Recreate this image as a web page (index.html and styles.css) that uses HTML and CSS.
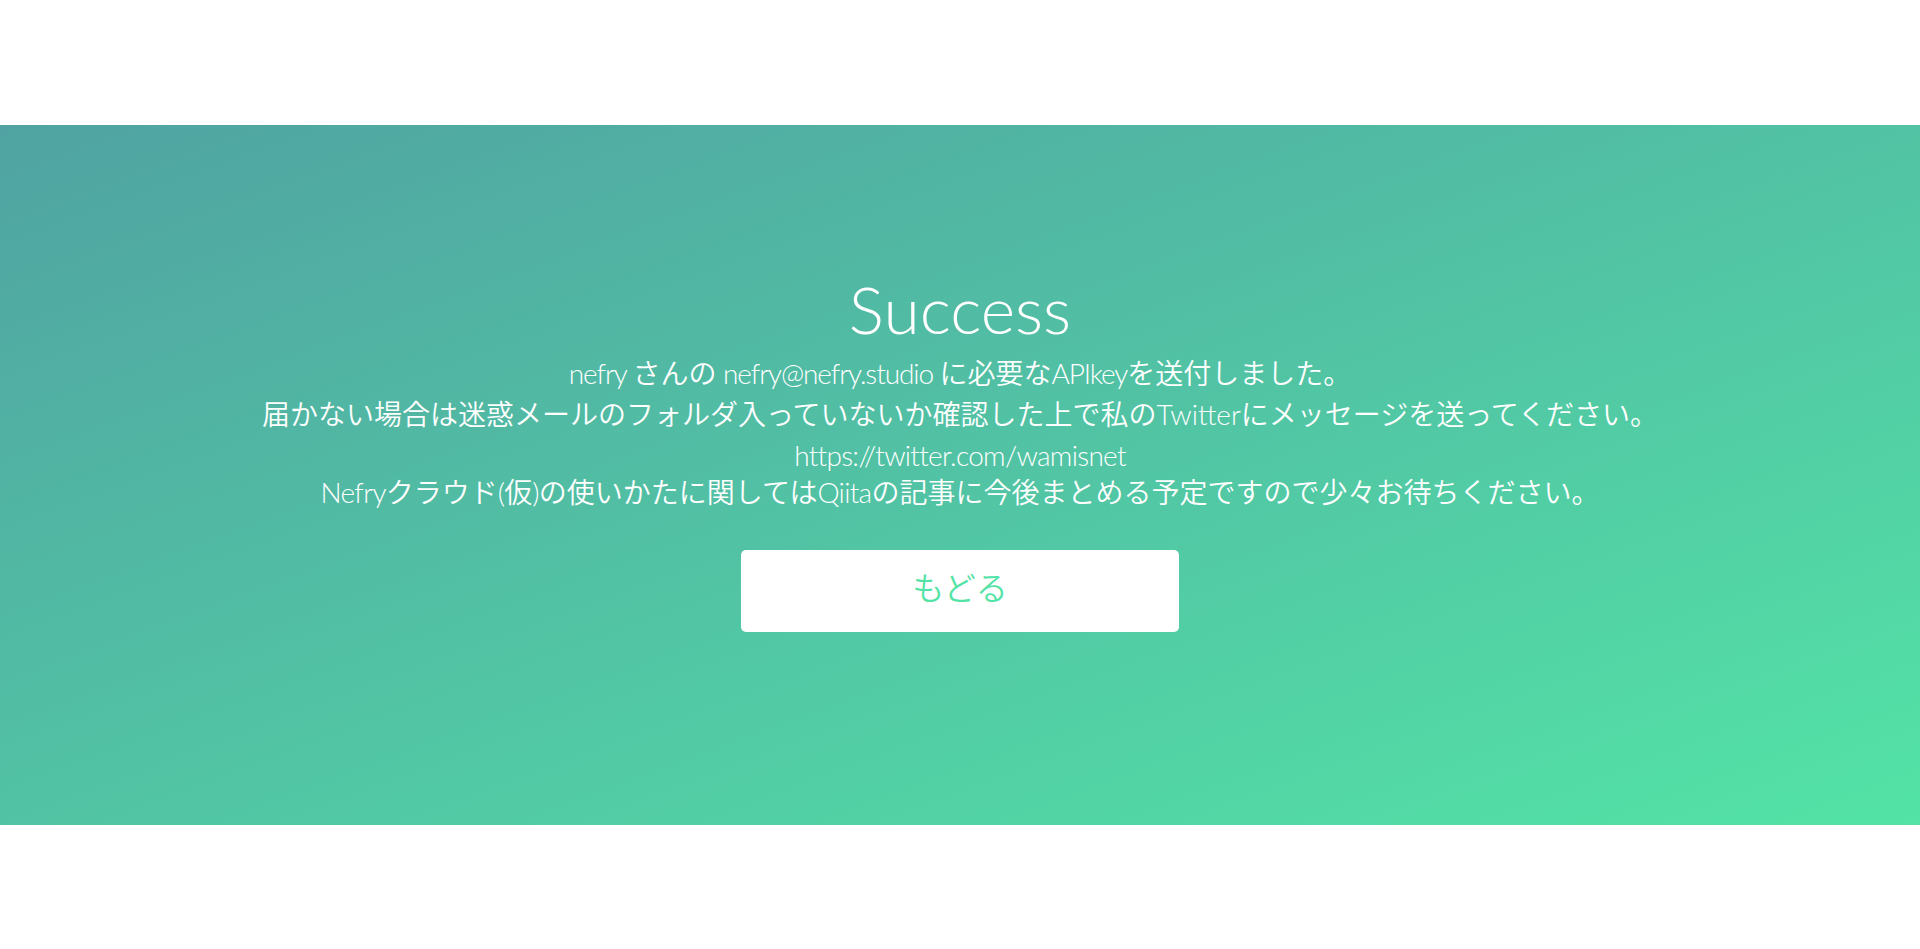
FILE: index.html
```html
<!DOCTYPE html>
<html lang="ja">
<head>
<meta charset="utf-8">
<title>Success</title>
<link rel="stylesheet" href="styles.css">
</head>
<body>
<div class="page">
  <section class="band">
    <div class="container">
      <h1 class="title">Success</h1>
      <div class="message">
        <div class="line"><span class="en tight">nefry </span>さんの<span class="en tight"> nefry@nefry.studio </span>に必要な<span class="en tight">APIkey</span>を送付しました。</div>
        <div class="line">届かない場合は迷惑メールのフォルダ入っていないか確認した上で私のTwitterにメッセージを送ってください。</div>
        <div class="line url"><span class="en">https://twitter.com/wamisnet</span></div>
        <div class="line"><span class="en">Nefry</span>クラウド<span class="en">(</span>仮<span class="en">)</span>の使いかたに関しては<span class="en">Qiita</span>の記事に今後まとめる予定ですので少々お待ちください。</div>
      </div>
      <button class="back" type="button">もどる</button>
    </div>
  </section>
</div>
</body>
</html>
```

FILE: styles.css
```css
html, body {
  margin: 0;
  padding: 0;
  background: #ffffff;
}

body {
  font-family: "Lato", "Noto Sans CJK JP", sans-serif;
  font-weight: 350;
  color: #ffffff;
}

.page {
  padding-top: 125px;
  height: 949px;
  box-sizing: border-box;
  overflow: hidden;
}

.band {
  height: 700px;
  width: 100%;
  background: linear-gradient(to bottom right, #50a3a2 0%, #53e3a6 100%);
}

.container {
  padding-top: 152px;
  display: flex;
  flex-direction: column;
  align-items: center;
  text-align: center;
}

.title {
  margin: 0;
  font-size: 66px;
  line-height: 63px;
  font-weight: 300;
}

.message {
  margin-top: 13px;
  font-size: 28px;
}

.line {
  line-height: 41px;
  white-space: nowrap;
}

.line.url {
  padding-top: 3px;
  line-height: 34px;
}

.en {
  letter-spacing: -0.7px;
}

.en.tight {
  letter-spacing: -1.1px;
}

.back {
  margin-top: 37px;
  width: 438px;
  height: 82px;
  border: 0;
  border-radius: 5px;
  background: #ffffff;
  color: #53e3a6;
  font-family: "Lato", "Noto Sans CJK JP", sans-serif;
  font-weight: 350;
  font-size: 32px;
  padding: 0 0 10px;
  cursor: pointer;
}
```
